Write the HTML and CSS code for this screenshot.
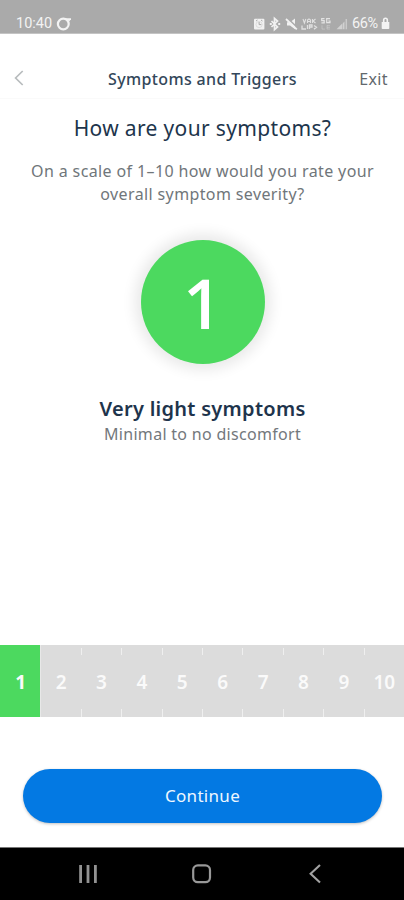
FILE: index.html
```html
<!DOCTYPE html>
<html lang="en">
<head>
<meta charset="utf-8">
<meta name="viewport" content="width=device-width, initial-scale=1">
<title>Symptoms and Triggers</title>
<link rel="stylesheet" href="styles.css">
</head>
<body>
<div class="screen">
  <div class="status">
    <span class="clock">10:40</span>
    <svg class="ring" width="16" height="16" viewBox="0 0 16 16" fill="none" stroke="#f3f3f3" stroke-width="2.2"><circle cx="7.3" cy="8" r="5.4"/><path d="M9 3.1H15M12.5 4.8L14.2 3" stroke-width="1.7"/></svg>
    <svg class="indicators" width="98" height="16" viewBox="0 0 98 16" fill="none" stroke="#f1f1f1">
      <rect x="1" y="2.8" width="10.4" height="10.6" rx="1" fill="#f1f1f1" stroke="none"/>
      <path d="M3 5l1.5-1M9.5 5L8 4M6.1 6v2.6h2.2" stroke="#aaa" stroke-width="1"/><circle cx="6.1" cy="8.5" r="3.1" stroke="#d0d0d0" stroke-width=".6"/>
      <path d="M18.5 5l6 6-3 2.6V2.4l3 2.6-6 6" stroke-width="1.7"/><path d="M16.8 8h2M25.2 8h2" stroke-width="2.2"/>
      <path d="M34 6.2h3l5-3.6v10.6l-5-3.6h-3z" fill="#f1f1f1" stroke="none"/><path d="M34.6 2.4l9.6 9" stroke="#aaa" stroke-width="1.5"/><path d="M33 3l10.8 10.3" stroke-width="1.8"/>
      <path d="M50 3l1.4 4 1.4-4M54.5 7V4l1.5-1 1.5 1v3M54.5 5.5h3M59.5 3v4M62.5 3l-2.5 2 2.5 2" stroke-width="1.1" opacity=".75"/>
      <path d="M49 9.5v3.5h4M54.5 9v4M56.5 13v-4h2.5v2h-2M61 9.5l2.5 1.8-2.5 1.8" stroke-width="1.3" opacity=".75"/>
      <path d="M71.5 2.6h-2.8v2h2.5v2.2h-2.8M77 2.7h-3.3v4H77V5h-1.7" stroke-width="1.2" opacity=".8"/><path d="M69 9.3v3.8h3M74 9.3v3.8M74 9.7h3M74 11.3h3M74 13h3" opacity=".3"/>
      <path d="M83.5 13.3h6v-6zM90 13.3V7l1.5-1.5v7.8z" fill="#f1f1f1" stroke="none" opacity=".55"/><path d="M93.3 13.3V3" opacity=".45" stroke-width="1.5"/>
    </svg>
    <span class="battery">66%</span>
    <svg class="lock" width="9" height="13" viewBox="0 0 9 13"><path d="M.7 5h7.6v6.2q0 .8-.8.8h-6q-.8 0-.8-.8z" fill="#f3f3f3"/><path d="M2.7 5V3a1.8 1.8 0 0 1 3.6 0v2" fill="none" stroke="#f3f3f3" stroke-width="1.6"/></svg>
  </div>
  <header class="header">
    <svg class="back" width="12" height="18" viewBox="0 0 12 18"><path d="M9.7 2L2.6 9l7.1 7" fill="none" stroke="#b8bcbe" stroke-width="1.7"/></svg>
    <h1 class="header-title">Symptoms and Triggers</h1>
    <span class="exit">Exit</span>
  </header>
  <main class="main">
    <h2 class="question">How are your symptoms?</h2>
    <p class="prompt">On a scale of 1–10 how would you rate your<br>overall symptom severity?</p>
    <div class="score">1</div>
    <h3 class="level">Very light symptoms</h3>
    <p class="detail">Minimal to no discomfort</p>
  </main>
  <div class="scale">
    <span class="step active">1</span><span class="step">2</span><span class="step">3</span><span class="step">4</span><span class="step">5</span><span class="step">6</span><span class="step">7</span><span class="step">8</span><span class="step">9</span><span class="step">10</span>
  </div>
  <div class="action"><button class="continue">Continue</button></div>
  <nav class="nav">
    <svg width="20" height="20" viewBox="0 0 20 20"><path d="M2.6 1v18M10 1v18M17.4 1v18" stroke="#929292" stroke-width="2.8"/></svg>
    <svg width="20" height="20" viewBox="0 0 20 20"><rect x="1.2" y="1.4" width="16.8" height="16.8" rx="4.6" fill="none" stroke="#989898" stroke-width="2.2"/></svg>
    <svg width="20" height="20" viewBox="0 0 20 20"><path d="M15 1L5.6 9.8l9.4 8.8" fill="none" stroke="#a2a2a2" stroke-width="2.1"/></svg>
  </nav>
</div>
</body>
</html>
```
FILE: styles.css
```css
* { box-sizing: border-box; }
body {
  margin: 0;
  background: #fff;
  font-family: "Noto Sans", "Open Sans", sans-serif;
}
h1, h2, h3, p { margin: 0; white-space: nowrap; }
svg { display: block; flex: none; }
.screen {
  width: 404px;
  height: 900px;
  display: flex;
  flex-direction: column;
  overflow: hidden;
}
.status {
  height: 34px;
  flex: none;
  display: flex;
  align-items: center;
  padding: 14px 14px 0 16px;
  background: #aaa;
  border-bottom: 1px solid #c4c4c4;
  color: #f3f3f3;
  font: 14.5px/19px Roboto, sans-serif;
}
.clock { width: 37px; }
.ring { margin-left: 3px; }
.indicators { margin-left: auto; }
.battery { width: 28px; margin-left: 1px; letter-spacing: -.4px; }
.lock { margin-left: 1px; }
.header {
  height: 65px;
  flex: none;
  display: grid;
  grid-template-columns: 60px 1fr 60px;
  align-items: center;
  padding: 24px 16px 0 13px;
  border-bottom: 1px solid #fafafa;
}
.header-title {
  padding: 2px 0 0 4px;
  text-align: center;
  font-size: 16px;
  line-height: 22px;
  font-weight: 500;
  letter-spacing: .35px;
  color: #33475a;
}
.exit { padding-top: 2px; text-align: right; font-size: 16px; line-height: 22px; letter-spacing: .4px; color: #62686d; }
.main {
  height: 546px;
  flex: none;
  display: flex;
  flex-direction: column;
  align-items: center;
  padding: 14px 0 0 1px;
}
.question { font-size: 21px; line-height: 30px; font-weight: 400; letter-spacing: .34px; color: #1d354c; }
.prompt { margin-top: 17px; text-align: center; font-size: 16px; line-height: 23px; letter-spacing: .38px; color: #70767a; }
.score {
  width: 124px;
  height: 124px;
  margin-top: 34px;
  padding: 2px 0 0;
  display: flex;
  align-items: center;
  justify-content: center;
  border-radius: 50%;
  background: #4cd95f;
  box-shadow: 0 0 14px 6px rgba(0, 0, 0, .09);
  color: #fff;
  font: 600 68px/90px "Open Sans", sans-serif;
}
.level { margin-top: 31px; font-size: 20px; line-height: 28px; font-weight: 600; letter-spacing: .28px; color: #1e344c; }
.detail { font-size: 16px; line-height: 23px; letter-spacing: .3px; color: #73787c; }
.scale {
  height: 72px;
  flex: none;
  display: grid;
  grid-template-columns: repeat(10, 1fr);
  background: #dcdcdc;
}
.step {
  display: flex;
  align-items: center;
  justify-content: center;
  padding: 2px 0 0 1px;
  font-size: 19px;
  font-weight: 600;
  color: #fafafa;
  background:
    linear-gradient(#efefef, #efefef) left 3px / 1px 7px no-repeat,
    linear-gradient(#efefef, #efefef) left bottom / 1px 8px no-repeat;
}
.step.active { background: #4cd95f; font-weight: 700; }
.step.active + .step { border-left: 1px solid #e8e8e8; padding-left: 0; background: none; }
.action { height: 130px; flex: none; padding: 52px 22px 0 23px; }
.continue {
  display: block;
  width: 100%;
  height: 54px;
  padding: 0;
  border: 0;
  border-radius: 27px;
  background: #0379e3;
  box-shadow: 0 1px 3px rgba(0, 0, 0, .25);
  color: #eef7ff;
  font: 17px/54px "Noto Sans", sans-serif;
  letter-spacing: .3px;
}
.nav {
  flex: 1;
  display: flex;
  align-items: center;
  justify-content: space-between;
  padding: 0 79px 0 78px;
  background: #000;
  border-top: 1px solid #777;
}
```
